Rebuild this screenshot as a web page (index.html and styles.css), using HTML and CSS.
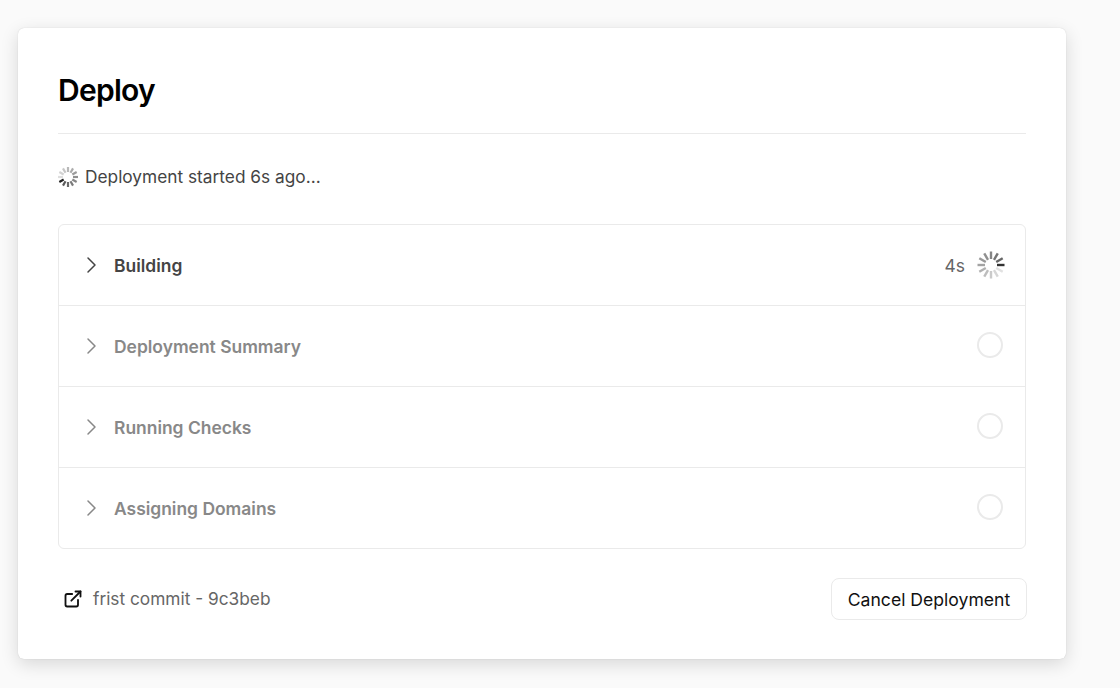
FILE: index.html
```html
<!DOCTYPE html>
<html lang="en">
<head>
<meta charset="utf-8">
<title>Deploy</title>
<link rel="stylesheet" href="styles.css">
</head>
<body>
<main class="card">
  <h1 class="title">Deploy</h1>
  <div class="status">
    <svg class="spin-small" viewBox="0 0 24 24" fill="none" stroke="#222" stroke-width="2.6">
      <g transform="rotate(150 12 12)">
        <line class="o1" x1="18" y1="12" x2="24" y2="12" transform="rotate(0 12 12)"/>
        <line class="o2" x1="18" y1="12" x2="24" y2="12" transform="rotate(-30 12 12)"/>
        <line class="o3" x1="18" y1="12" x2="24" y2="12" transform="rotate(-60 12 12)"/>
        <line class="o4" x1="18" y1="12" x2="24" y2="12" transform="rotate(-90 12 12)"/>
        <line class="o5" x1="18" y1="12" x2="24" y2="12" transform="rotate(-120 12 12)"/>
        <line class="o6" x1="18" y1="12" x2="24" y2="12" transform="rotate(-150 12 12)"/>
        <line class="o7" x1="18" y1="12" x2="24" y2="12" transform="rotate(-180 12 12)"/>
        <line class="o8" x1="18" y1="12" x2="24" y2="12" transform="rotate(-210 12 12)"/>
        <line class="o9" x1="18" y1="12" x2="24" y2="12" transform="rotate(-240 12 12)"/>
        <line class="o10" x1="18" y1="12" x2="24" y2="12" transform="rotate(-270 12 12)"/>
        <line class="o11" x1="18" y1="12" x2="24" y2="12" transform="rotate(-300 12 12)"/>
        <line class="o12" x1="18" y1="12" x2="24" y2="12" transform="rotate(-330 12 12)"/>
      </g>
    </svg>
    <span class="status-text">Deployment started 6s ago...</span>
  </div>
  <section class="steps">
    <div class="step step-active">
      <svg class="chevron" viewBox="0 0 24 24" fill="none" stroke="currentColor" stroke-width="1.5" stroke-linecap="round" stroke-linejoin="round"><path d="M8 5l7 7-7 7"/></svg>
      <span class="step-name">Building</span>
      <span class="step-time">4s</span>
      <svg class="spin-large" viewBox="0 0 28 28" fill="none" stroke="#333" stroke-width="2.4" stroke-linecap="butt">
        <line class="o1" x1="20" y1="14" x2="27.5" y2="14" transform="rotate(0 14 14)"/>
        <line class="o2" x1="20" y1="14" x2="27.5" y2="14" transform="rotate(-30 14 14)"/>
        <line class="o3" x1="20" y1="14" x2="27.5" y2="14" transform="rotate(-60 14 14)"/>
        <line class="o4" x1="20" y1="14" x2="27.5" y2="14" transform="rotate(-90 14 14)"/>
        <line class="o5" x1="20" y1="14" x2="27.5" y2="14" transform="rotate(-120 14 14)"/>
        <line class="o6" x1="20" y1="14" x2="27.5" y2="14" transform="rotate(-150 14 14)"/>
        <line class="o7" x1="20" y1="14" x2="27.5" y2="14" transform="rotate(-180 14 14)"/>
        <line class="o8" x1="20" y1="14" x2="27.5" y2="14" transform="rotate(-210 14 14)"/>
        <line class="o9" x1="20" y1="14" x2="27.5" y2="14" transform="rotate(-240 14 14)"/>
        <line class="o10" x1="20" y1="14" x2="27.5" y2="14" transform="rotate(-270 14 14)"/>
        <line class="o11" x1="20" y1="14" x2="27.5" y2="14" transform="rotate(-300 14 14)"/>
        <line class="o12" x1="20" y1="14" x2="27.5" y2="14" transform="rotate(-330 14 14)"/>
      </svg>
    </div>
    <div class="step">
      <svg class="chevron" viewBox="0 0 24 24" fill="none" stroke="currentColor" stroke-width="1.5" stroke-linecap="round" stroke-linejoin="round"><path d="M8 5l7 7-7 7"/></svg>
      <span class="step-name">Deployment Summary</span>
      <span class="pending"></span>
    </div>
    <div class="step">
      <svg class="chevron" viewBox="0 0 24 24" fill="none" stroke="currentColor" stroke-width="1.5" stroke-linecap="round" stroke-linejoin="round"><path d="M8 5l7 7-7 7"/></svg>
      <span class="step-name">Running Checks</span>
      <span class="pending"></span>
    </div>
    <div class="step">
      <svg class="chevron" viewBox="0 0 24 24" fill="none" stroke="currentColor" stroke-width="1.5" stroke-linecap="round" stroke-linejoin="round"><path d="M8 5l7 7-7 7"/></svg>
      <span class="step-name">Assigning Domains</span>
      <span class="pending"></span>
    </div>
  </section>
  <footer class="footer">
    <div class="commit">
      <svg class="external" viewBox="0 0 24 24" fill="none" stroke="#111" stroke-width="2.2" stroke-linecap="round" stroke-linejoin="round"><path d="M18 13v6a2 2 0 0 1-2 2H5a2 2 0 0 1-2-2V8a2 2 0 0 1 2-2h6"/><path d="M15 3h6v6"/><path d="M10 14L21 3"/></svg>
      <span class="status-text">frist commit - 9c3beb</span>
    </div>
    <button class="cancel" type="button">Cancel Deployment</button>
  </footer>
</main>
</body>
</html>
```

FILE: styles.css
```css
* { box-sizing: border-box; }

html, body { height: 100%; }

body {
  margin: 0;
  padding: 28px 54px 0 18px;
  background: #fafafa;
  font-family: Inter, "Liberation Sans", sans-serif;
  overflow: hidden;
}

.card {
  height: 631px;
  padding: 40px;
  background: #fff;
  border-radius: 6px;
  box-shadow: 0 0 1px rgba(0,0,0,.2), 0 5px 18px rgba(0,0,0,.14);
}

.title {
  margin: 0;
  height: 66px;
  font-size: 30px;
  line-height: 44px;
  font-weight: 600;
  letter-spacing: -0.75px;
  color: #000;
  border-bottom: 1px solid #eaeaea;
}

.status {
  display: flex;
  align-items: center;
  gap: 7px;
  height: 24px;
  margin-top: 31px;
  font-size: 17.3px;
  color: #444;
}

.status-text { padding-bottom: 2px; }

.spin-small { width: 20px; height: 20px; flex: none; }

.steps {
  margin-top: 35px;
  border: 1px solid #eaeaea;
  border-radius: 6px;
}

.step {
  display: flex;
  align-items: center;
  height: 81px;
  padding: 0 22px 0 21px;
  font-size: 17.45px;
  color: #888;
  border-bottom: 1px solid #eaeaea;
}

.step:last-child { height: 80px; border-bottom: 0; }

.step-active { color: #444; }

.chevron { width: 24px; height: 24px; flex: none; margin-right: 10px; }

.step-name { flex: 1; font-weight: 600; }

.step-time { margin-right: 12px; color: #666; }

.spin-large { width: 28px; height: 28px; flex: none; margin-right: -2px; }

.pending {
  width: 26.5px;
  height: 26.5px;
  margin-top: -2px;
  border: 2px solid #eaeaea;
  border-radius: 50%;
}

.footer {
  display: flex;
  align-items: center;
  justify-content: space-between;
  margin-top: 29px;
  margin-right: -1px;
}

.commit {
  display: flex;
  align-items: center;
  gap: 10px;
  padding-left: 5px;
  font-size: 17.3px;
  color: #666;
}

.external { width: 20px; height: 20px; flex: none; }

.cancel {
  width: 196px;
  height: 42px;
  padding: 0;
  background: #fff;
  border: 1px solid #eaeaea;
  border-radius: 8px;
  font-family: inherit;
  font-size: 17.6px;
  color: #111;
}

.o1 { opacity: 1; }
.o2 { opacity: .75; }
.o3 { opacity: .68; }
.o4 { opacity: .6; }
.o5 { opacity: .55; }
.o6 { opacity: .5; }
.o7 { opacity: .45; }
.o8 { opacity: .38; }
.o9 { opacity: .32; }
.o10 { opacity: .26; }
.o11 { opacity: .2; }
.o12 { opacity: .15; }
```
